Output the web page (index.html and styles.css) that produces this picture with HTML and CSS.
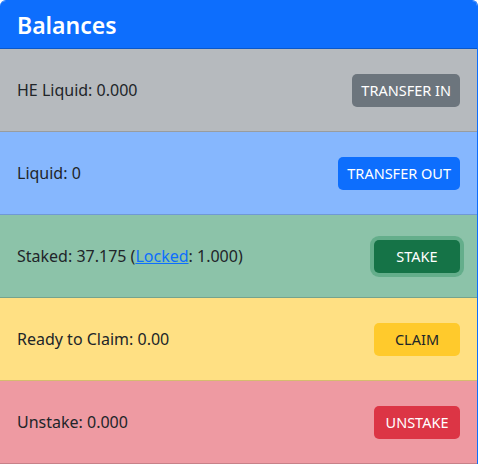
FILE: index.html
```html
<!DOCTYPE html>
<html lang="en">
<head>
<meta charset="utf-8">
<title>Balances</title>
<link rel="stylesheet" href="styles.css">
</head>
<body>
<div class="card">
  <div class="card-header"><h3 class="title">Balances</h3></div>
  <ul class="list">
    <li class="row row-secondary">
      <span class="label">HE Liquid: 0.000</span>
      <button class="btn btn-secondary">TRANSFER IN</button>
    </li>
    <li class="row row-primary">
      <span class="label">Liquid: 0</span>
      <button class="btn btn-primary">TRANSFER OUT</button>
    </li>
    <li class="row row-success">
      <span class="label">Staked: 37.175 (<a href="#" class="link">Locked</a>: 1.000)</span>
      <button class="btn btn-success btn-fixed btn-focus">STAKE</button>
    </li>
    <li class="row row-warning">
      <span class="label">Ready to Claim: 0.00</span>
      <button class="btn btn-warning btn-fixed">CLAIM</button>
    </li>
    <li class="row row-danger">
      <span class="label">Unstake: 0.000</span>
      <button class="btn btn-danger btn-fixed">UNSTAKE</button>
    </li>
  </ul>
</div>
</body>
</html>
```
FILE: styles.css
```css
* { box-sizing: border-box; }
html, body { margin: 0; padding: 0; background: #fff; }
body {
  font-family: "Noto Sans", "Open Sans", "DejaVu Sans", sans-serif;
  font-size: 16px;
  color: #212529;
}
.card {
  width: 478px;
  border: 1px solid #0d6efd;
  border-left: 0;
  border-bottom: 0;
  border-radius: 6px 6px 0 0;
  overflow: hidden;
}
.card-header {
  background: #0d6efd;
  padding: 10px 17px 9px;
  border-bottom: 1px solid #0a58ca;
}
.title {
  margin: 0;
  font-size: 23px;
  line-height: 28px;
  font-weight: 600;
  color: #fff;
}
.list {
  list-style: none;
  margin: 0;
  padding: 0;
}
.row {
  display: flex;
  align-items: center;
  justify-content: space-between;
  height: 83px;
  padding: 0 17px;
  border-bottom: 1px solid rgba(0, 0, 0, 0.16);
  line-height: 24px;
}
.row-secondary { background: #b6babe; }
.row-primary { background: #86b7fe; }
.row-success { background: #8cc3a9; }
.row-warning { background: #ffe083; }
.row-danger { background: #ee9aa2; }
.link { color: #0d6efd; text-decoration: underline; }
.btn {
  font-family: inherit;
  font-size: 14.5px;
  line-height: 24px;
  height: 33px;
  padding: 0 9px;
  border: 0;
  border-radius: 5px;
  color: #fff;
  text-align: center;
}
.btn-fixed { min-width: 86px; }
.btn-secondary { background: #6c757d; }
.btn-primary { background: #0d6efd; }
.btn-success { background: #157347; }
.btn-focus { box-shadow: 0 0 0 4px rgba(60, 153, 110, 0.5); }
.btn-warning { background: #ffca2c; color: #212529; }
.btn-danger { background: #dc3545; }
```
